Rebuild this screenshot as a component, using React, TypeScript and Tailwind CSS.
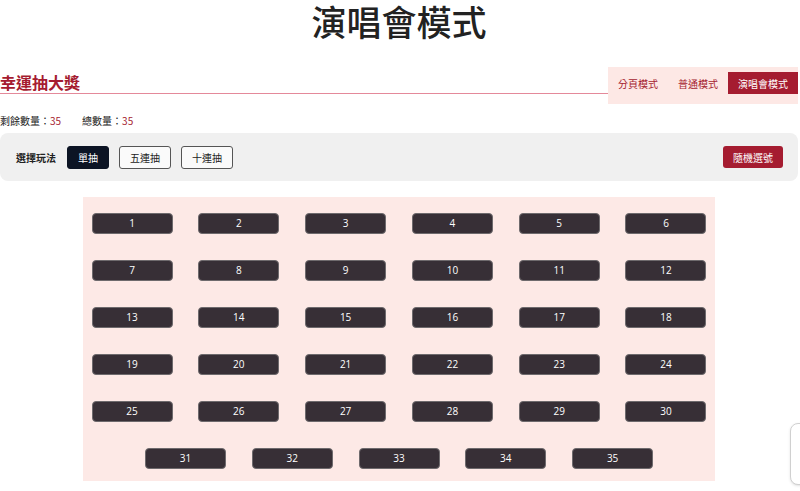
import React from "react";

const nums = Array.from({ length: 35 }, (_, i) => i + 1);

export default function App() {
  return (
    <div
      className="w-[798px] bg-white text-[#222]"
      style={{ fontFamily: '"Noto Sans CJK TC", "Noto Sans", sans-serif' }}
    >
      <h1 className="pt-[2px] text-center text-[35px] font-medium leading-[38px] text-[#222]">
        演唱會模式
      </h1>

      <div className="mt-[27px] flex items-start">
        <div className="flex h-[27px] flex-1 flex-col">
          <h2 className="pt-[7px] text-[16px] font-bold leading-[16px] text-[#a51c30]">幸運抽大獎</h2>
          <div className="mt-auto h-px bg-[#e4899a]" />
        </div>
        <div className="flex bg-[#fde8e5] pt-[5px] pb-[10px]">
          <div className="flex h-[22px] items-center px-[10px] text-[10px] text-[#a51c30]">分頁模式</div>
          <div className="flex h-[22px] items-center px-[10px] text-[10px] text-[#a51c30]">普通模式</div>
          <div className="flex h-[22px] items-center bg-[#a51c30] px-[10px] text-[10px] text-white">演唱會模式</div>
        </div>
      </div>

      <div className="mt-[10px] flex text-[10px] leading-[14px] text-[#222]">
        <span className="mr-[21px]">
          剩餘數量：<span className="text-[#a51c30]">35</span>
        </span>
        <span>
          總數量：<span className="text-[#a51c30]">35</span>
        </span>
      </div>

      <div className="mt-[5px] flex h-[48px] items-center rounded-lg bg-[#f0f0f0] pl-4 pr-[15px]">
        <span className="mr-[11px] text-[10px] font-bold">選擇玩法</span>
        <div className="flex gap-[10px]">
          <button className="h-[23px] rounded-[3px] border border-[#0c1424] bg-[#0c1424] px-[10px] text-[10px] text-white">
            單抽
          </button>
          <button className="h-[23px] rounded-[3px] border border-[#555] bg-[#fafafa] px-[10px] text-[10px] text-[#222]">
            五連抽
          </button>
          <button className="h-[23px] rounded-[3px] border border-[#555] bg-[#fafafa] px-[10px] text-[10px] text-[#222]">
            十連抽
          </button>
        </div>
        <button className="ml-auto h-[22px] rounded-[3px] bg-[#a51c30] px-[10px] text-[10px] text-white">
          隨機選號
        </button>
      </div>

      <div className="mx-auto mt-[16px] flex w-[632px] flex-wrap justify-center gap-x-[25.8px] gap-y-[26px] bg-[#fde9e6] pt-[16px] pb-[12px]">
        {nums.map((n) => (
          <button
            key={n}
            className="flex h-[21px] w-[81px] items-center justify-center rounded-[4px] border border-[#6e6a6d] bg-[#372f36] text-[10px] text-white"
            style={{ fontFamily: '"Open Sans", "Noto Sans", sans-serif' }}
          >
            {n}
          </button>
        ))}
      </div>

      <div className="fixed left-[790px] top-[423px] h-[62px] w-[40px] rounded-lg border border-[#d0d0d0] bg-white shadow-sm" />
    </div>
  );
}
